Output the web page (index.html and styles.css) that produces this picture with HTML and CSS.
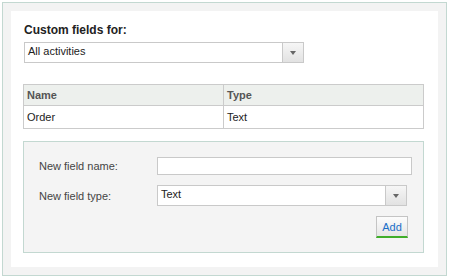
FILE: index.html
```html
<!DOCTYPE html>
<html lang="en">
  <head>
    <meta charset="UTF-8" />
    <title>Custom fields</title>
    <link rel="stylesheet" href="styles.css">
  </head>
  <body>
    <div id="frame">
      <div id="panel">
        <div class="title">Custom fields for:</div>
        <div class="combo combo-wide">
          <span class="combo-text">All activities</span>
          <span class="combo-btn"><i class="arrow"></i></span>
        </div>

        <table id="fields">
          <tr>
            <th>Name</th>
            <th>Type</th>
          </tr>
          <tr>
            <td>Order</td>
            <td>Text</td>
          </tr>
        </table>

        <div id="new-field">
          <div class="row">
            <label>New field name:</label>
            <input type="text" class="text-input" />
          </div>
          <div class="row">
            <label>New field type:</label>
            <div class="combo combo-type">
              <span class="combo-text">Text</span>
              <span class="combo-btn"><i class="arrow"></i></span>
            </div>
          </div>
          <div class="actions">
            <button class="add-btn">Add</button>
          </div>
        </div>
      </div>
    </div>
  </body>
</html>
```

FILE: styles.css
```css
* {
  margin: 0;
  padding: 0;
  box-sizing: border-box;
}

body {
  padding: 2px;
  font-family: "Liberation Sans", Arial, sans-serif;
  font-size: 11px;
  color: #333;
  background: #fff;
}

#frame {
  width: 445px;
  height: 274px;
  border: 1px solid #c3d8d1;
  background: #f3f3f3;
  padding: 8px;
}

#panel {
  background: #fff;
  height: 256px;
  padding: 12px 14px 0 12px;
}

.title {
  font-size: 12px;
  font-weight: bold;
  line-height: 15px;
  color: #222;
  margin-left: 1px;
  margin-bottom: 4px;
}

.combo {
  display: flex;
  height: 21px;
  border: 1px solid #c9c9c9;
  background: #fff;
}

.combo-wide {
  width: 280px;
  margin-left: 1px;
}

.combo-text {
  flex: 1;
  line-height: 17px;
  padding-left: 3px;
  color: #222;
}

.combo-btn {
  width: 21px;
  border-left: 1px solid #c9c9c9;
  background: linear-gradient(#f6f6f6, #e2e2e2);
  display: flex;
  align-items: center;
  justify-content: center;
}

.arrow {
  width: 0;
  height: 0;
  border-left: 3px solid transparent;
  border-right: 3px solid transparent;
  border-top: 4px solid #666;
}

#fields {
  width: 401px;
  margin-top: 21px;
  border-collapse: collapse;
}

#fields th,
#fields td {
  width: 200px;
  border: 1px solid #cbcbcb;
  text-align: left;
  padding: 0 3px;
}

#fields th {
  height: 21px;
  background: #edf0ed;
  color: #555;
  font-weight: bold;
}

#fields td {
  height: 23px;
  color: #222;
}

#new-field {
  width: 401px;
  height: 112px;
  margin-top: 12px;
  border: 1px solid #c3d8d1;
  background: #f4f4f4;
  padding: 15px 11px 0 15px;
}

.row {
  display: flex;
  align-items: center;
  margin-bottom: 10px;
}

.row label {
  width: 118px;
  color: #444;
}

.text-input {
  flex: 1;
  height: 18px;
  border: 1px solid #c9c9c9;
  background: #fff;
}

.combo-type {
  width: 250px;
  height: 21px;
}

.actions {
  display: flex;
  justify-content: flex-end;
  padding-right: 4px;
}

.add-btn {
  width: 32px;
  height: 22px;
  border: 1px solid #c4c4c4;
  border-bottom: 2px solid #3fae2a;
  background: linear-gradient(#fcfcfc, #e6e6e6);
  color: #1a6fc9;
  font-family: "Liberation Sans", Arial, sans-serif;
  font-size: 11px;
}
```
